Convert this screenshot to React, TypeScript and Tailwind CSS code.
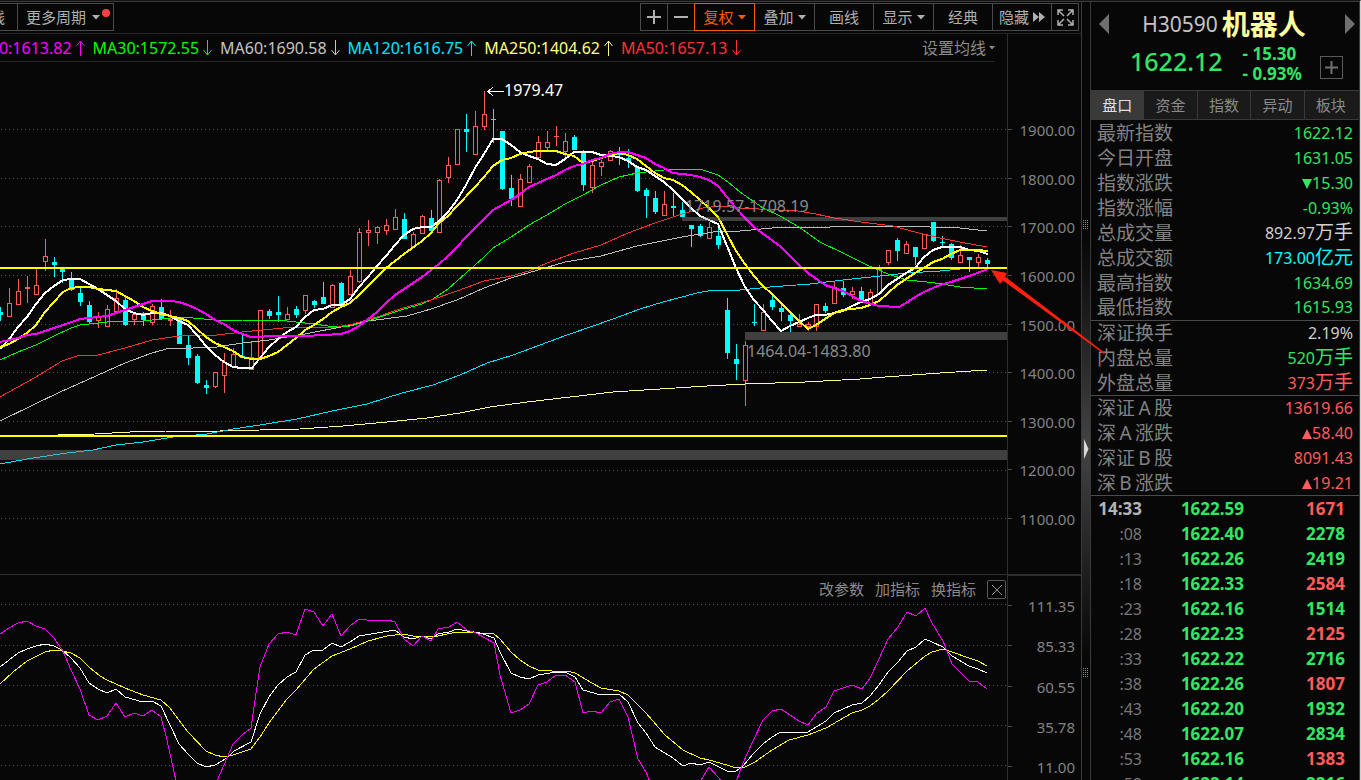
import type { ReactNode } from "react";

// [x, high, body top, body bottom, low, kind]  kind: 1 = rising (hollow), 0 = falling (filled)
type Candle = [number, number, number, number, number, 0 | 1];

const CANDLES: Candle[] = [
  [0, 307, 312, 314, 320, 0], [9, 288, 303, 316, 316, 1], [18, 279, 291, 304, 304, 1],
  [27, 276, 287, 288, 302, 1], [36, 269, 285, 294, 294, 1], [45, 239, 256, 261, 270, 1],
  [54, 257, 262, 264, 276, 0], [62, 268, 269, 271, 282, 0], [71, 272, 279, 289, 290, 0],
  [80, 288, 293, 301, 305, 0], [89, 301, 305, 321, 322, 0], [98, 312, 316, 320, 327, 1],
  [107, 305, 309, 326, 326, 1], [116, 289, 298, 311, 311, 1], [125, 297, 300, 324, 325, 0],
  [134, 312, 314, 319, 324, 1], [143, 312, 313, 319, 325, 0], [152, 304, 306, 322, 324, 1],
  [161, 299, 307, 318, 319, 0], [170, 310, 319, 320, 325, 1], [179, 317, 318, 343, 343, 0],
  [188, 336, 345, 357, 364, 0], [197, 354, 356, 382, 383, 0], [206, 380, 385, 387, 393, 0],
  [215, 372, 372, 386, 387, 1], [224, 353, 362, 375, 392, 1], [233, 348, 354, 366, 366, 1],
  [242, 333, 356, 357, 357, 0], [251, 341, 357, 369, 369, 1], [260, 310, 310, 358, 358, 1],
  [269, 309, 311, 315, 318, 0], [278, 296, 312, 314, 321, 0], [287, 307, 314, 319, 319, 1],
  [296, 306, 309, 314, 317, 0], [305, 295, 295, 310, 313, 1], [314, 300, 301, 304, 307, 0],
  [323, 282, 297, 303, 303, 0], [332, 284, 285, 307, 307, 1], [341, 282, 283, 304, 307, 0],
  [350, 270, 276, 294, 294, 1], [359, 228, 232, 281, 282, 1], [368, 220, 230, 232, 245, 1],
  [377, 226, 227, 232, 243, 1], [386, 219, 225, 230, 234, 1], [395, 209, 217, 229, 229, 1],
  [404, 213, 219, 238, 238, 0], [413, 232, 234, 246, 246, 1], [422, 215, 216, 233, 233, 1],
  [431, 210, 218, 230, 232, 0], [439, 179, 180, 232, 232, 1], [448, 157, 165, 177, 182, 1],
  [457, 129, 129, 164, 164, 1], [466, 114, 129, 131, 151, 0], [475, 111, 126, 154, 154, 1],
  [484, 91, 114, 126, 129, 1], [493, 109, 119, 119, 142, 0], [502, 131, 131, 188, 189, 0],
  [511, 175, 188, 198, 205, 0], [520, 174, 179, 206, 206, 1], [529, 164, 166, 182, 182, 1],
  [538, 136, 142, 157, 159, 1], [547, 131, 142, 147, 150, 1], [556, 126, 136, 136, 145, 1],
  [565, 133, 141, 151, 156, 1], [574, 135, 137, 149, 149, 0], [583, 150, 152, 184, 190, 0],
  [592, 160, 165, 187, 192, 1], [601, 160, 162, 166, 175, 1], [610, 150, 151, 160, 160, 1],
  [619, 147, 153, 154, 164, 0], [628, 149, 158, 160, 167, 0], [637, 166, 167, 190, 191, 0],
  [646, 188, 190, 195, 217, 0], [655, 191, 198, 211, 213, 0], [664, 191, 204, 215, 215, 1],
  [673, 193, 206, 207, 215, 0], [682, 202, 210, 216, 216, 0], [691, 225, 225, 228, 246, 0],
  [700, 224, 226, 235, 236, 0], [709, 222, 227, 238, 238, 1], [718, 228, 236, 244, 248, 0],
  [727, 298, 310, 352, 358, 0], [736, 344, 359, 363, 379, 0], [745, 341, 345, 380, 405, 1],
  [754, 304, 322, 322, 325, 0], [763, 304, 312, 330, 330, 1], [772, 295, 300, 306, 309, 0],
  [781, 305, 308, 311, 320, 0], [790, 312, 315, 320, 331, 0], [799, 314, 324, 326, 326, 1],
  [808, 322, 324, 326, 330, 1], [816, 304, 304, 326, 330, 1], [825, 303, 306, 310, 312, 0],
  [834, 282, 287, 303, 303, 1], [843, 281, 288, 294, 296, 0], [852, 287, 291, 294, 298, 1],
  [861, 287, 291, 300, 301, 0], [870, 289, 292, 304, 304, 1], [879, 265, 269, 293, 293, 1],
  [888, 250, 250, 262, 264, 1], [897, 238, 240, 250, 260, 0], [906, 241, 244, 253, 253, 1],
  [915, 247, 247, 256, 264, 0], [924, 234, 234, 248, 248, 1], [933, 222, 222, 240, 241, 0],
  [942, 236, 242, 242, 245, 0], [951, 243, 244, 257, 259, 0], [960, 245, 255, 262, 262, 1],
  [969, 257, 257, 259, 271, 0], [978, 254, 257, 262, 266, 1], [987, 258, 260, 263, 266, 0],
];

const MA5 =
  "0,349 10,338 18,327 27,317 36,304 45,293 54,286 63,280 71,279 80,279 89,284 98,289 107,295 116,301 125,309 134,313 143,315 152,313 161,313 170,316 179,321 188,325 197,335 206,346 215,355 224,362 233,367 242,368 252,368 260,358 269,347 278,339 287,332 296,327 305,317 314,310 323,309 332,305 341,305 350,299 359,287 368,277 377,266 386,256 395,245 404,235 413,229 422,227 431,227 439,221 448,212 457,200 466,185 475,168 484,154 493,139 502,139 511,145 520,152 529,156 538,159 547,164 556,165 565,159 574,152 592,152 601,155 619,157 628,161 637,167 646,170 655,176 664,182 673,190 682,199 691,208 700,216 709,220 718,224 727,246 736,268 745,287 754,300 763,310 772,321 781,331 790,326 799,322 808,318 816,315 825,315 834,313 843,311 852,306 861,302 870,299 879,294 888,285 897,279 906,273 915,268 924,257 933,250 942,247 960,247 969,250 978,251 988,254";
const MA10 =
  "0,347 9,344 18,339 27,333 36,325 45,312 54,302 63,292 71,288 80,287 89,287 98,289 116,291 125,296 134,301 143,307 152,311 161,314 170,316 179,318 188,321 197,329 206,337 215,343 224,347 233,351 242,357 251,359 260,359 269,356 278,352 287,345 296,338 305,330 314,325 323,319 332,312 341,307 350,303 359,295 377,277 386,268 395,261 404,254 422,241 431,233 439,223 448,216 457,206 475,187 484,177 493,166 502,160 511,158 520,154 529,152 538,151 556,151 565,154 574,156 583,163 592,161 610,155 619,153 628,155 637,159 646,166 655,173 664,178 673,180 682,185 691,192 700,200 709,208 718,217 727,234 736,251 745,264 754,276 763,286 772,294 781,303 790,312 799,321 808,329 816,325 825,319 834,313 843,310 852,309 861,308 870,305 879,301 888,293 897,285 906,279 915,273 924,268 933,262 942,259 951,254 960,250 978,250 988,251";
const MA20 =
  "0,342 9,340 18,338 27,335 36,334 45,331 63,325 80,319 107,316 125,310 134,307 152,301 161,301 170,301 179,302 188,305 197,309 206,314 215,320 224,324 233,330 242,334 251,337 278,336 305,336 341,334 350,331 359,326 368,319 377,312 386,303 395,295 404,289 413,283 422,277 431,270 439,264 448,256 457,247 466,237 475,228 484,219 493,210 511,200 520,194 529,187 547,179 556,175 565,170 574,166 583,164 592,160 601,158 610,154 619,152 628,152 637,155 646,158 655,164 664,168 673,173 691,175 700,177 709,180 718,186 727,197 736,208 745,218 754,227 781,247 799,265 808,273 825,285 843,291 861,301 879,306 899,307 906,303 915,297 924,292 940,285 951,282 969,276 988,269";
const MA30 =
  "0,360 9,356 18,352 36,345 54,336 71,328 80,325 98,323 116,321 143,321 161,319 179,317 193,318 215,320 242,320 287,321 314,324 328,326 350,326 368,321 386,315 404,309 422,304 433,299 448,289 466,273 484,257 493,248 511,237 529,225 547,215 565,204 583,195 601,185 619,177 637,173 655,171 673,169 700,169 718,175 728,182 740,192 763,208 780,216 799,227 820,242 843,253 867,265 888,274 907,280 927,282 942,284 960,287 987,289";
const MA50 =
  "0,397 36,377 62,361 80,355 98,355 125,348 152,340 179,336 197,335 217,335 242,332 283,328 337,327 353,324 377,317 400,309 431,300 457,291 484,281 511,276 529,271 547,263 574,253 601,245 628,233 655,223 682,214 703,208 720,206 740,208 798,211 816,214 834,218 861,222 893,226 915,232 940,238 960,242 987,247";
const MA60 =
  "0,421 33,405 60,392 87,380 125,363 152,353 170,348 193,348 217,347 242,343 269,340 305,334 341,327 368,321 407,316 431,309 457,300 484,288 511,278 538,270 565,262 601,256 637,246 682,237 713,232 740,231 783,227 830,227 850,226 913,226 930,227 960,228 987,231";
const MA120 =
  "0,464 33,458 67,453 93,450 116,445 143,442 173,437 207,434 233,429 260,425 297,419 332,411 367,404 402,393 433,385 460,375 487,363 513,355 540,345 567,335 593,326 613,319 640,309 663,302 697,293 713,290 740,290 770,287 810,284 843,280 880,276 907,273 940,271 960,269 987,268";
const MA250 =
  "0,436 58,435 95,434 130,432 166,431 220,431 260,430 300,429 343,426 387,422 427,418 460,413 490,407 527,402 570,397 613,392 660,389 707,386 745,384 805,382 860,379 885,377 940,373 987,370";

const J_LINE =
  "0,634 9,628 18,623 27,621 36,626 45,629 54,638 63,651 71,670 80,689 89,715 98,720 107,716 116,703 125,717 134,713 143,716 152,710 161,717 167,740 176,781 217,781 224,765 233,744 242,735 251,728 255,700 260,667 269,644 278,634 287,632 296,635 305,609 314,612 323,626 332,614 341,636 350,626 359,619 367,620 388,620 395,622 404,639 413,646 422,636 431,641 438,629 449,627 457,622 467,630 476,633 485,638 494,643 500,675 511,713 520,710 529,704 538,685 547,682 556,675 565,675 575,682 583,713 592,711 601,713 610,702 619,699 628,717 638,759 646,772 650,782 700,782 709,767 719,778 722,782 736,782 743,763 753,741 763,720 772,711 781,709 799,721 808,725 817,713 826,707 834,691 852,685 862,689 870,678 879,659 888,639 898,627 907,612 916,616 925,608 932,623 943,641 952,664 969,681 978,682 987,689";
const K_LINE =
  "0,667 9,660 18,653 27,649 36,646 45,644 54,646 62,650 71,658 80,668 89,683 98,689 107,693 116,689 125,697 143,702 152,701 161,706 170,725 179,744 188,754 197,763 206,767 215,765 227,758 234,751 251,742 260,714 269,697 278,685 287,677 296,672 305,655 314,650 323,650 332,643 341,647 350,642 359,636 377,633 395,630 404,637 413,639 422,636 431,639 438,634 449,632 457,629 467,631 480,633 494,638 500,652 511,673 520,677 529,679 538,675 556,672 567,673 575,677 583,690 601,695 610,694 619,694 628,702 638,723 646,733 655,747 673,758 683,766 691,763 700,765 709,762 727,771 736,771 743,766 753,754 763,744 772,737 781,732 808,732 826,721 834,713 852,705 862,703 870,696 879,685 888,672 898,662 907,651 916,647 925,639 932,642 943,647 952,656 969,666 978,669 987,673";
const D_LINE =
  "0,684 13,672 27,661 45,652 54,650 62,651 71,653 80,658 89,667 100,676 107,680 116,684 125,688 143,695 161,700 170,708 188,732 206,751 215,755 224,757 233,755 251,749 260,737 269,723 287,699 296,690 314,669 332,656 350,649 368,641 387,636 403,634 413,636 433,637 457,632 477,633 494,634 500,639 511,652 520,660 529,666 538,670 552,671 567,671 575,673 592,683 601,688 619,691 628,695 646,713 665,735 683,750 700,758 709,760 727,765 736,768 745,767 755,762 772,750 789,740 808,735 826,728 852,713 862,710 870,706 879,699 888,691 907,671 925,656 932,652 943,649 952,652 969,658 978,661 987,666";

const UPPER_GRID = [129, 178, 226, 275, 324, 372, 421, 470, 518];
const LOWER_GRID = [604, 645, 685, 725, 765];
const UPPER_LABELS = ["1900.00", "1800.00", "1700.00", "1600.00", "1500.00", "1400.00", "1300.00", "1200.00", "1100.00"];
const LOWER_LABELS = ["111.35", "85.33", "60.55", "35.78", "11.00"];

const GREEN = "text-[#33e564]";
const RED = "text-[#ff5c5c]";

const AVERAGES = [
  { text: "MA20:1613.82", tone: "text-[#ff00ff]", up: true },
  { text: "MA30:1572.55", tone: "text-[#00ff00]", up: false },
  { text: "MA60:1690.58", tone: "text-[#c4c4c4]", up: false },
  { text: "MA120:1616.75", tone: "text-[#00e5ff]", up: true },
  { text: "MA250:1404.62", tone: "text-[#ffff80]", up: true },
  { text: "MA50:1657.13", tone: "text-[#ff3232]", up: false },
];

type Quote = { label: string; value: string; unit?: string; mark?: "up" | "down"; tone: string };

const QUOTE_GROUPS: Quote[][] = [
  [
    { label: "最新指数", value: "1622.12", tone: GREEN },
    { label: "今日开盘", value: "1631.05", tone: GREEN },
    { label: "指数涨跌", value: "15.30", mark: "down", tone: GREEN },
    { label: "指数涨幅", value: "-0.93%", tone: GREEN },
    { label: "总成交量", value: "892.97", unit: "万手", tone: "text-[#cfcfcf]" },
    { label: "总成交额", value: "173.00", unit: "亿元", tone: "text-[#00ffff]" },
    { label: "最高指数", value: "1634.69", tone: GREEN },
    { label: "最低指数", value: "1615.93", tone: GREEN },
  ],
  [
    { label: "深证换手", value: "2.19%", tone: "text-[#cfcfcf]" },
    { label: "内盘总量", value: "520", unit: "万手", tone: GREEN },
    { label: "外盘总量", value: "373", unit: "万手", tone: RED },
  ],
  [
    { label: "深证A股", value: "13619.66", tone: RED },
    { label: "深A涨跌", value: "58.40", mark: "up", tone: RED },
    { label: "深证B股", value: "8091.43", tone: RED },
    { label: "深B涨跌", value: "19.21", mark: "up", tone: RED },
  ],
];

const TICKS = [
  { time: "14:33", price: "1622.59", volume: "1671", tone: RED },
  { time: ":08", price: "1622.40", volume: "2278", tone: GREEN },
  { time: ":13", price: "1622.26", volume: "2419", tone: GREEN },
  { time: ":18", price: "1622.33", volume: "2584", tone: RED },
  { time: ":23", price: "1622.16", volume: "1514", tone: GREEN },
  { time: ":28", price: "1622.23", volume: "2125", tone: RED },
  { time: ":33", price: "1622.22", volume: "2716", tone: GREEN },
  { time: ":38", price: "1622.26", volume: "1807", tone: RED },
  { time: ":43", price: "1622.20", volume: "1932", tone: GREEN },
  { time: ":48", price: "1622.07", volume: "2834", tone: GREEN },
  { time: ":53", price: "1622.16", volume: "1383", tone: RED },
  { time: ":58", price: "1622.14", volume: "2216", tone: GREEN },
];

function Caret({ className = "" }: { className?: string }) {
  return (
    <svg viewBox="0 0 8 5" className={`h-[5px] w-2 shrink-0 fill-current ${className}`} aria-hidden="true">
      <path d="M0 0h8L4 4.5z" />
    </svg>
  );
}

function TrendArrow({ up }: { up: boolean }) {
  return (
    <svg viewBox="0 0 9 16" className="h-4 w-[9px] shrink-0" fill="none" stroke="currentColor" aria-hidden="true">
      {up ? <path d="M4.5 16V1M0.5 6l4-5 4 5" /> : <path d="M4.5 0v15M0.5 10l4 5 4-5" />}
    </svg>
  );
}

function ToolButton({ label, width, active, children }: { label?: string; width: string; active?: boolean; children: ReactNode }) {
  return (
    <button
      type="button"
      aria-label={label}
      className={`-ml-px flex h-7 items-center justify-center border text-[15px] ${width} ${
        active ? "relative z-10 border-[#ff5a0a] text-[#ff5a0a]" : "border-[#4a4a4a] text-[#b0b0b0]"
      }`}
    >
      {children}
    </button>
  );
}

function Toolbar() {
  return (
    <div className="flex h-8 shrink-0 items-start justify-between overflow-hidden border-b border-[#262626] pt-px">
      <div className="flex">
        <button type="button" className="flex h-7 w-[17px] items-center justify-end border-y border-[#4a4a4a] pr-3 text-[15px] text-[#b0b0b0]">
          线
        </button>
        <button type="button" className="relative flex h-7 w-[97px] items-center gap-1.5 border border-[#4a4a4a] pl-2 text-[15px] text-[#b0b0b0]">
          更多周期
          <Caret />
          <span className="absolute top-[5px] right-[3px] size-2 rounded-full bg-[#ff4040]" />
        </button>
      </div>
      <div className="mr-0.5 flex">
        <ToolButton label="放大" width="w-[28px]">
          <svg viewBox="0 0 14 14" className="size-3.5" stroke="currentColor" strokeWidth="2" aria-hidden="true"><path d="M7 0v14M0 7h14" /></svg>
        </ToolButton>
        <ToolButton label="缩小" width="w-[28px]">
          <svg viewBox="0 0 14 14" className="size-3.5" stroke="currentColor" strokeWidth="2" aria-hidden="true"><path d="M0 7h14" /></svg>
        </ToolButton>
        <ToolButton width="w-[61px]" active>复权<Caret className="ml-1" /></ToolButton>
        <ToolButton width="w-[61px]">叠加<Caret className="ml-1" /></ToolButton>
        <ToolButton width="w-[60px]">画线</ToolButton>
        <ToolButton width="w-[61px]">显示<Caret className="ml-1" /></ToolButton>
        <ToolButton width="w-[60px]">经典</ToolButton>
        <ToolButton width="w-[60px]">
          隐藏
          <svg viewBox="0 0 12 10" className="ml-1 h-2.5 w-3 fill-current" aria-hidden="true"><path d="M0 0l6 5-6 5zM6 0l6 5-6 5z" /></svg>
        </ToolButton>
        <ToolButton label="全屏" width="w-[28px]">
          <svg viewBox="0 0 17 17" className="size-[17px]" fill="none" stroke="currentColor" strokeWidth="1.5" aria-hidden="true">
            <path d="M6 1H1v5M1 1l6 6M11 1h5v5M16 1l-6 6M1 11v5h5M1 16l6-6M16 11v5h-5M16 16l-6-6" />
          </svg>
        </ToolButton>
      </div>
    </div>
  );
}

function GridLines({ rows }: { rows: number[] }) {
  return (
    <g stroke="#525252" strokeDasharray="1 3">
      {rows.map((y) => (
        <line key={y} x1="1" x2="1007" y1={y + 0.5} y2={y + 0.5} />
      ))}
    </g>
  );
}

function PriceChart() {
  return (
    <svg viewBox="0 62 1007 512" className="block w-full" fill="none" shapeRendering="crispEdges" role="img" aria-label="K线图">
      <GridLines rows={UPPER_GRID} />
      {CANDLES.map(([x, high, top, bottom, low, up]) =>
        up ? (
          <g key={x} fill="#ff5c5c">
            <rect x={x} y={high} width="1" height={top - high} />
            <rect x={x} y={bottom + 1} width="1" height={low - bottom} />
            {bottom - top < 2 ? (
              <rect x={x - 2} y={top} width="5" height={bottom - top + 1} />
            ) : (
              <rect x={x - 1.5} y={top + 0.5} width="4" height={bottom - top} fill="none" stroke="#ff5c5c" />
            )}
          </g>
        ) : (
          <g key={x} fill="#00ffff">
            <rect x={x} y={high} width="1" height={low - high + 1} />
            <rect x={x - 2} y={top} width="5" height={bottom - top + 1} />
          </g>
        ),
      )}
      <polyline points={MA250} stroke="#ffff90" />
      <polyline points={MA120} stroke="#00e5ff" />
      <polyline points={MA60} stroke="#bdbdbd" />
      <polyline points={MA30} stroke="#00ff00" />
      <polyline points={MA50} stroke="#ff3232" />
      <polyline points={MA5} stroke="#ffffff" strokeWidth="2" />
      <polyline points={MA10} stroke="#ffff00" strokeWidth="2" />
      <polyline points={MA20} stroke="#ff00ff" strokeWidth="2" />
      <g fill="#8c8c8c" fillOpacity="0.44">
        <rect x="682" y="217" width="325" height="4" />
        <rect x="745" y="332" width="262" height="8" />
        <rect x="0" y="450" width="1007" height="10" />
      </g>
      <path d="M0 268h1007M0 436h1007" stroke="#ffff00" strokeWidth="2" />
      <path d="M487 91.5h17M493 87l-5 4.5 5 4.5" stroke="#ffffff" />
      <g fontSize="16" fontFamily="Noto Sans, sans-serif">
        <text x="504" y="96" fill="#ffffff">1979.47</text>
        <text x="685" y="212" fill="#8a8a8a">1719.57-1708.19</text>
        <text x="747" y="357" fill="#8a8a8a">1464.04-1483.80</text>
      </g>
    </svg>
  );
}

function IndicatorChart() {
  return (
    <svg viewBox="0 600 1007 180" className="block w-full" fill="none" shapeRendering="crispEdges" role="img" aria-label="KDJ指标">
      <GridLines rows={LOWER_GRID} />
      <polyline points={D_LINE} stroke="#ffff00" />
      <polyline points={K_LINE} stroke="#ffffff" />
      <polyline points={J_LINE} stroke="#ff00ff" />
    </svg>
  );
}

function AxisLabels({ labels, className }: { labels: string[]; className: string }) {
  return (
    <ul className={`flex flex-col justify-between text-right text-[15px] leading-5 text-[#828282] ${className}`}>
      {labels.map((label) => (
        <li key={label} className="relative pr-1.5">
          {label}
          <span className="absolute top-[9px] left-0 h-px w-1 bg-[#4a4a4a]" />
        </li>
      ))}
    </ul>
  );
}

function Charts() {
  return (
    <main className="flex min-w-0 flex-1 flex-col border-r border-[#3a3a3a]">
      <Toolbar />
      <div className="flex">
        <div className="min-w-0 flex-1">
          <div className="mr-3 flex h-7 items-center justify-between overflow-hidden border-b border-[#262626]">
            <div className="-ml-[35px] flex gap-2 text-[16px] leading-7">
              {AVERAGES.map((item) => (
                <span key={item.text} className={`flex items-center gap-1 whitespace-nowrap ${item.tone}`}>
                  {item.text}
                  <TrendArrow up={item.up} />
                </span>
              ))}
            </div>
            <button type="button" className="flex items-center gap-[3px] text-[16px] whitespace-nowrap text-[#8a8a8a]">
              设置均线
              <svg viewBox="0 0 6 4" className="h-1 w-1.5 fill-current" aria-hidden="true"><path d="M0 0h6L3 3.5z" /></svg>
            </button>
          </div>
          <PriceChart />
        </div>
        <div className="w-[74px] shrink-0 border-l border-[#2e2e2e] pt-[86px]">
          <AxisLabels labels={UPPER_LABELS} className="h-[409px]" />
        </div>
      </div>
      <div className="flex flex-1 border-t border-[#2e2e2e]">
        <div className="min-w-0 flex-1">
          <div className="flex h-[25px] items-center justify-end gap-[11px] pt-1 pr-px text-[15px] text-[#8a8a8a]">
            <button type="button">改参数</button>
            <button type="button">加指标</button>
            <button type="button">换指标</button>
            <button type="button" aria-label="关闭" className="flex h-[19px] w-[19px] items-center justify-center rounded-xs border border-[#5a5a5a]">
              <svg viewBox="0 0 10 10" className="size-2.5" stroke="currentColor" aria-hidden="true"><path d="M0 0l10 10M10 0L0 10" /></svg>
            </button>
          </div>
          <IndicatorChart />
        </div>
        <div className="w-[74px] shrink-0 border-t border-l border-[#2e2e2e] pt-5">
          <AxisLabels labels={LOWER_LABELS} className="h-[181px]" />
        </div>
      </div>
    </main>
  );
}

function Grip() {
  return (
    <svg viewBox="0 0 6 10" className="h-2.5 w-1.5" stroke="#8a8a8a" strokeDasharray="1 1" aria-hidden="true">
      <path d="M0.5 0v10M2.5 0v10M4.5 0v10" />
    </svg>
  );
}

function Splitter() {
  return (
    <div className="flex w-2 shrink-0 flex-col items-center justify-between bg-linear-to-b from-[#070707] from-30% via-[#444444] via-57% to-[#070707] to-85% pt-[218px] pb-[102px]">
      <Grip />
      <svg viewBox="0 0 5 20" className="h-5 w-[5px] fill-[#d8d8d8]" aria-hidden="true"><path d="M0 0l4.5 10L0 20z" /></svg>
      <Grip />
    </div>
  );
}

function QuoteMark({ kind }: { kind: "up" | "down" }) {
  return (
    <svg viewBox="0 0 10 10" className="inline-block size-2.5 fill-current align-baseline" aria-hidden="true">
      {kind === "up" ? <path d="M5 0l5 10H0z" /> : <path d="M0 0h10L5 10z" />}
    </svg>
  );
}

function QuoteLabel({ text }: { text: string }) {
  return (
    <>
      {Array.from(text).map((char, i) => (
        <span key={i} className="inline-block w-[19px] text-center">{char}</span>
      ))}
    </>
  );
}

function QuotePanel() {
  const tabs = ["盘口", "资金", "指数", "异动", "板块"];
  return (
    <aside className="w-[270px] shrink-0 border-r border-l border-r-[#3a3a3a] border-l-[#3a3a3a]">
      <header className="h-[88px] px-2 pt-1">
        <div className="flex h-9 items-center justify-between">
          <button type="button" aria-label="上一个">
            <svg viewBox="0 0 10 20" className="h-5 w-2.5 fill-[#707070]" aria-hidden="true"><path d="M10 0v20L0 10z" /></svg>
          </button>
          <h1 className="mr-1.5 flex items-center gap-1">
            <span className="text-[21px] leading-9 text-[#c4c4c4]">H30590</span>
            <span className="text-[28px] leading-9 font-bold text-[#ffffa0]">机器人</span>
          </h1>
          <button type="button" aria-label="下一个" className="-mr-1">
            <svg viewBox="0 0 10 20" className="h-5 w-2.5 fill-[#707070]" aria-hidden="true"><path d="M0 0v20l10-10z" /></svg>
          </button>
        </div>
        <div className={`flex h-12 items-center pl-[31px] ${GREEN}`}>
          <span className="pb-2.5 text-[25px] leading-8 font-medium">1622.12</span>
          <span className="ml-5 pb-1 text-[17px] leading-5 font-bold">
            <span className="block">- 15.30</span>
            <span className="block">- 0.93%</span>
          </span>
          <button type="button" aria-label="加自选" className="mt-0.5 mr-2 ml-auto flex size-[23px] items-center justify-center border border-[#5a5a5a] text-[#707070]">
            <svg viewBox="0 0 13 13" className="size-[13px]" stroke="currentColor" strokeWidth="2" aria-hidden="true"><path d="M6.5 0v13M0 6.5h13" /></svg>
          </button>
        </div>
      </header>
      <nav className="flex h-[30px] border-y border-[#3a3a3a]">
        {tabs.map((tab, i) => (
          <button
            key={tab}
            type="button"
            className={`flex-1 text-[15px] last:pr-0.5 ${i === 0 ? "bg-[#3a3a3a] text-[#e0e0e0]" : "border-l border-[#3a3a3a] bg-[#1a1a1a] text-[#8a8a8a]"}`}
          >
            {tab}
          </button>
        ))}
      </nav>
      <table className="w-full border-collapse">
        {QUOTE_GROUPS.map((group, g) => (
          <tbody key={g} className="border-b border-[#4a4a4a]">
            {group.map((row) => (
              <tr key={row.label} className="h-[25px]">
                <th scope="row" className="p-0 pl-1.5 text-left text-[19px] leading-6 font-normal text-[#828282]">
                  <QuoteLabel text={row.label} />
                </th>
                <td className={`p-0 pr-1.5 text-right text-[16px] leading-6 whitespace-nowrap ${row.tone}`}>
                  {row.mark && <QuoteMark kind={row.mark} />}
                  {row.value}
                  {row.unit && <span className="text-[19px]">{row.unit}</span>}
                </td>
              </tr>
            ))}
          </tbody>
        ))}
      </table>
      <table className="w-full table-fixed border-collapse">
        <tbody>
          {TICKS.map((tick, i) => (
            <tr key={tick.time} className="h-[25px]">
              <td className={`w-[51px] p-0 text-right leading-6 ${i === 0 ? "text-[17px] font-bold text-[#b4b4b4]" : "text-[16px] text-[#787878]"}`}>{tick.time}</td>
              <td className={`w-[102px] p-0 text-right text-[17px] leading-6 font-bold ${GREEN}`}>{tick.price}</td>
              <td className={`p-0 pr-3.5 text-right text-[17px] leading-6 font-bold ${tick.tone}`}>{tick.volume}</td>
            </tr>
          ))}
        </tbody>
      </table>
    </aside>
  );
}

export default function App() {
  return (
    <div className="relative h-screen overflow-hidden border-t border-r border-t-[#151515] border-r-[#d0d0d0] bg-[#070707] font-['Noto_Sans','Noto_Sans_CJK_SC',sans-serif]">
      <div className="flex h-full border-t border-[#3a3a3a]">
        <Charts />
        <Splitter />
        <QuotePanel />
      </div>
      <svg viewBox="0 0 114 84" className="pointer-events-none absolute top-[269px] right-[255px] h-[84px] w-[114px] fill-[#ff2010]" aria-hidden="true">
        <path d="M0 0l16 3-2 3.500 100 76.500-1 1L12 10.500 9 14z" />
      </svg>
    </div>
  );
}
